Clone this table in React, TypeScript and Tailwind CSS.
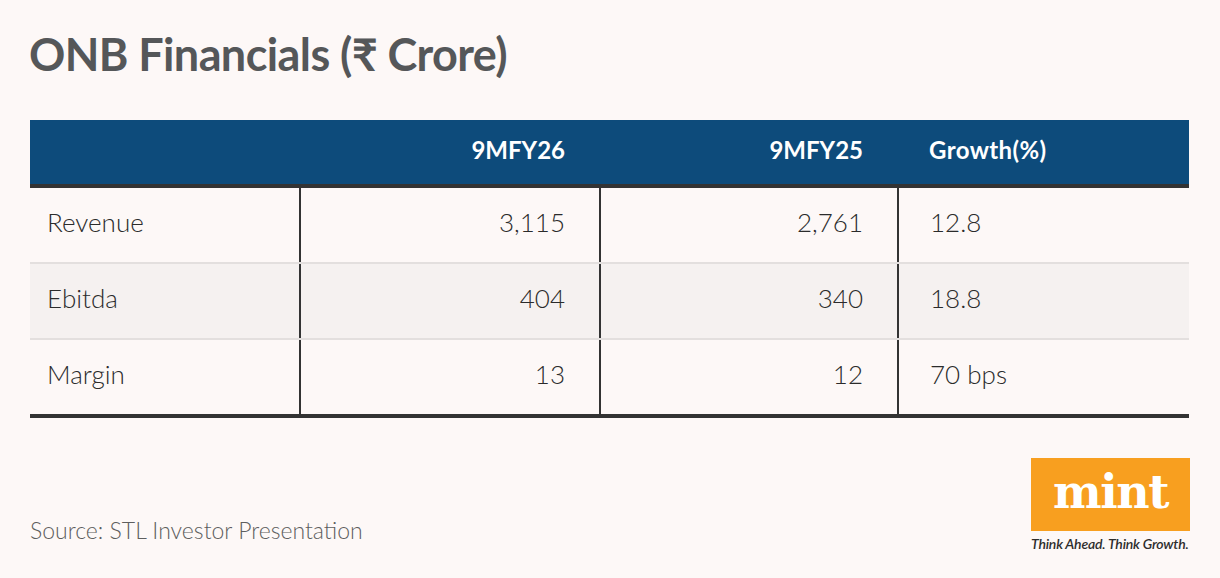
const rows = [
  { label: "Revenue", a: "3,115", b: "2,761", g: "12.8", shaded: false },
  { label: "Ebitda", a: "404", b: "340", g: "18.8", shaded: true },
  { label: "Margin", a: "13", b: "12", g: "70 bps", shaded: false },
];

export default function App() {
  return (
    <div className="w-[1220px] h-[578px] bg-[#fdf8f7] flex flex-col font-['Lato','Roboto',sans-serif] overflow-hidden">
      {/* Title */}
      <h1 className="pl-[29px] pt-[27px] h-[120px] text-[45px] leading-[54px] font-bold text-[#555759] tracking-[-0.6px]">
        ONB Financials (₹ Crore)
      </h1>

      {/* Table */}
      <div className="mx-[30px] w-[1159px]">
        <div className="grid grid-cols-[269px_300px_298px_292px] h-[64px] bg-[#0d4b7b] items-center text-white font-bold text-[24px] border-b-[4px] border-[#333] box-content">
          <div />
          <div className="text-right pr-[34px] -mt-[4px]">9MFY26</div>
          <div className="text-right pr-[34px] -mt-[4px]">9MFY25</div>
          <div className="pl-[32px] -mt-[4px] tracking-[0.4px]">Growth(%)</div>
        </div>
        {rows.map((r, i) => (
          <div
            key={r.label}
            className={`grid grid-cols-[269px_300px_298px_292px] h-[74px] text-[26px] font-light text-[#2b2b2b] ${
              r.shaded ? "bg-[#f5f1f0]" : ""
            } ${i < rows.length - 1 ? "border-b-2 border-[#e3dfde] box-content" : ""}`}
          >
            <div className="flex items-center pl-[17px] pb-[6px]">{r.label}</div>
            <div className="flex items-center justify-end pr-[34px] pb-[6px] border-l-2 border-[#333]">{r.a}</div>
            <div className="flex items-center justify-end pr-[34px] pb-[6px] border-l-2 border-[#333]">{r.b}</div>
            <div className="flex items-center pl-[31px] pb-[6px] border-l-2 border-[#333]">{r.g}</div>
          </div>
        ))}
        <div className="h-[4px] bg-[#333]" />
      </div>

      {/* Footer */}
      <div className="flex justify-between items-start mx-[30px] mt-[40px]">
        <p className="mt-[55px] text-[23px] font-light text-[#5e5e5e]">
          Source: STL Investor Presentation
        </p>
        <div className="flex flex-col w-[159px]">
          <div className="h-[73px] bg-[#f89f1f] flex items-center justify-center">
            <span className="text-white font-bold text-[46px] leading-none font-['DejaVu_Serif',serif] tracking-[-1.5px] -mt-[6px]">
              mint
            </span>
          </div>
          <span className="mt-[5px] text-[14px] leading-[16px] italic font-semibold text-[#2d2d2d] whitespace-nowrap tracking-[-0.2px]">
            Think Ahead. Think Growth.
          </span>
        </div>
      </div>
    </div>
  );
}
